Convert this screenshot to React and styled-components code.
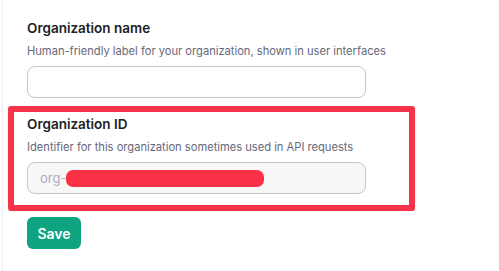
import React from 'react';
import styled, { createGlobalStyle } from 'styled-components';

const GlobalStyle = createGlobalStyle`
  html, body {
    margin: 0;
    padding: 0;
    background: #ffffff;
  }
  body {
    font-family: Inter, "Noto Sans", "Liberation Sans", sans-serif;
    -webkit-font-smoothing: antialiased;
  }
`;

const Page = styled.div`
  width: 499px;
  height: 271px;
  padding-left: 2px;
  box-sizing: border-box;
  overflow: hidden;
`;

const Panel = styled.div`
  height: 100%;
  border-left: 1px solid #ececf1;
  padding: 18px 0 0 24px;
  box-sizing: border-box;
  display: flex;
  flex-direction: column;
`;

const Field = styled.div`
  position: relative;
  width: 339px;
  display: flex;
  flex-direction: column;
  margin-bottom: ${(p) => p.$gap || 0}px;
`;

// annotation frame drawn on top of the screenshot
const Highlight = styled.div`
  position: absolute;
  inset: -8px -49px -17px -19px;
  border: 6px solid #f7334a;
  border-radius: 3px;
  box-shadow: 0 0 2px rgba(0, 0, 0, 0.12);
  pointer-events: none;
`;

const Label = styled.div`
  font-size: 13.5px;
  line-height: 20px;
  font-weight: 600;
  color: #202123;
`;

const Hint = styled.div`
  margin-top: 5px;
  font-size: 11.15px;
  line-height: 16px;
  color: #676779;
  white-space: nowrap;
`;

const Input = styled.div`
  margin-top: 7px;
  height: 32px;
  box-sizing: border-box;
  border: 1px solid #c5c5d2;
  border-radius: 8px;
  background: ${(p) => (p.$disabled ? '#f7f7f8' : '#ffffff')};
  padding-left: 12px;
  display: flex;
  align-items: center;
  font-size: 13px;
  color: #acacbe;
`;

const Redaction = styled.span`
  display: inline-block;
  width: 198px;
  height: 17px;
  border-radius: 7px;
  background: #fa3248;
`;

const SaveButton = styled.button`
  align-self: flex-start;
  width: 54px;
  height: 32px;
  border: none;
  border-radius: 6px;
  background: #10a37f;
  color: #ffffff;
  font-family: inherit;
  font-size: 14px;
  font-weight: 600;
  padding: 0;
  cursor: pointer;
`;

const App = () => (
  <Page>
    <GlobalStyle />
    <Panel>
      <Field $gap={16}>
        <Label>Organization name</Label>
        <Hint>Human-friendly label for your organization, shown in user interfaces</Hint>
        <Input />
      </Field>

      <Field $gap={23}>
        <Highlight />
        <Label>Organization ID</Label>
        <Hint>Identifier for this organization sometimes used in API requests</Hint>
        <Input $disabled>
          org-
          <Redaction />
        </Input>
      </Field>

      <SaveButton>Save</SaveButton>
    </Panel>
  </Page>
);

export default App;
